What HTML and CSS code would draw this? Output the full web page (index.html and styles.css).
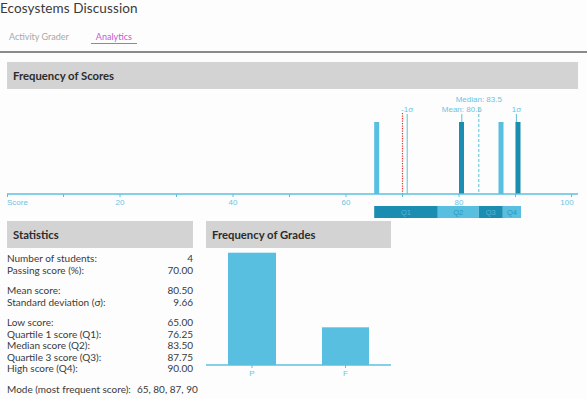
FILE: index.html
```html
<!DOCTYPE html>
<html lang="en">
<head>
    <meta charset="UTF-8">
    <title>Ecosystems Discussion</title>
    <link rel="stylesheet" href="styles.css">
</head>
<body>
    <h1 class="page-title">Ecosystems Discussion</h1>
    <nav class="tabs">
        <span class="tab">Activity Grader</span>
        <span class="tab tab-active">Analytics</span>
    </nav>
    <hr class="divider">

    <div class="content">
        <section class="panel">
            <h2 class="panel-title">Frequency of Scores</h2>
            <svg class="score-chart" width="571" height="132" viewBox="0 0 571 132">
                <!-- reference lines -->
                <line x1="395.5" y1="24" x2="395.5" y2="105" stroke="#e8322b" stroke-width="1.2" stroke-dasharray="1.2 1.3"/>
                <line x1="400.2" y1="25" x2="400.2" y2="105" stroke="#5bc0e0" stroke-width="1"/>
                <line x1="454.8" y1="25" x2="454.8" y2="105" stroke="#5bc0e0" stroke-width="1"/>
                <line x1="471.8" y1="20" x2="471.8" y2="105" stroke="#5bc0e0" stroke-width="1" stroke-dasharray="3 2"/>
                <line x1="509.4" y1="25" x2="509.4" y2="105" stroke="#5bc0e0" stroke-width="1"/>

                <g class="ref-label">
                    <text x="400.2" y="23" text-anchor="middle">-1σ</text>
                    <text x="454.8" y="23" text-anchor="middle">Mean: 80.5</text>
                    <text x="471.8" y="13" text-anchor="middle">Median: 83.5</text>
                    <text x="509.4" y="23" text-anchor="middle">1σ</text>
                </g>

                <!-- bars -->
                <rect x="367.2" y="33" width="5" height="72" fill="#58bfe0"/>
                <rect x="452" y="33" width="5" height="72" fill="#1b8db0"/>
                <rect x="491.5" y="33" width="5" height="72" fill="#58bfe0"/>
                <rect x="508.5" y="33" width="5" height="72" fill="#1b8db0"/>

                <!-- axis -->
                <line x1="0" y1="105" x2="571" y2="105" stroke="#5bc0e0" stroke-width="1.5"/>
                <g stroke="#5bc0e0" stroke-width="1">
                    <line x1="0.5" y1="105" x2="0.5" y2="108"/>
                    <line x1="56.5" y1="105" x2="56.5" y2="108"/>
                    <line x1="113" y1="105" x2="113" y2="108"/>
                    <line x1="169.5" y1="105" x2="169.5" y2="108"/>
                    <line x1="226" y1="105" x2="226" y2="108"/>
                    <line x1="282.5" y1="105" x2="282.5" y2="108"/>
                    <line x1="339" y1="105" x2="339" y2="108"/>
                    <line x1="395.5" y1="105" x2="395.5" y2="108"/>
                    <line x1="452" y1="105" x2="452" y2="108"/>
                    <line x1="508.5" y1="105" x2="508.5" y2="108"/>
                    <line x1="564.5" y1="105" x2="564.5" y2="108"/>
                </g>
                <g class="axis-label">
                    <text x="0" y="116">Score</text>
                    <text x="113" y="116" text-anchor="middle">20</text>
                    <text x="226" y="116" text-anchor="middle">40</text>
                    <text x="339" y="116" text-anchor="middle">60</text>
                    <text x="452" y="116" text-anchor="middle">80</text>
                    <text x="560" y="116" text-anchor="middle">100</text>
                </g>

                <!-- quartiles -->
                <rect x="367.2" y="117" width="63.6" height="12" fill="#1b8db0"/>
                <rect x="430.8" y="117" width="41" height="12" fill="#58bfe0"/>
                <rect x="471.8" y="117" width="24" height="12" fill="#1b8db0"/>
                <rect x="495.8" y="117" width="18.2" height="12" fill="#58bfe0"/>
                <g class="quartile-label">
                    <text x="399" y="126" text-anchor="middle" fill="#5ab6d8">Q1</text>
                    <text x="451.3" y="126" text-anchor="middle" fill="#2a97bd">Q2</text>
                    <text x="483.8" y="126" text-anchor="middle" fill="#5ab6d8">Q3</text>
                    <text x="504.9" y="126" text-anchor="middle" fill="#2a97bd">Q4</text>
                </g>
            </svg>
        </section>

        <div class="bottom-row">
            <section class="panel stats-panel">
                <h2 class="panel-title">Statistics</h2>
                <div class="stat-group">
                    <div class="stat-row"><span>Number of students:</span><span>4</span></div>
                    <div class="stat-row"><span>Passing score (%):</span><span>70.00</span></div>
                </div>
                <div class="stat-group">
                    <div class="stat-row"><span>Mean score:</span><span>80.50</span></div>
                    <div class="stat-row"><span>Standard deviation (σ):</span><span>9.66</span></div>
                </div>
                <div class="stat-group">
                    <div class="stat-row"><span>Low score:</span><span>65.00</span></div>
                    <div class="stat-row"><span>Quartile 1 score (Q1):</span><span>76.25</span></div>
                    <div class="stat-row"><span>Median score (Q2):</span><span>83.50</span></div>
                    <div class="stat-row"><span>Quartile 3 score (Q3):</span><span>87.75</span></div>
                    <div class="stat-row"><span>High score (Q4):</span><span>90.00</span></div>
                </div>
                <div class="stat-group">
                    <div class="stat-row"><span>Mode (most frequent score):</span><span>65, 80, 87, 90</span></div>
                </div>
            </section>

            <section class="panel grades-panel">
                <h2 class="panel-title">Frequency of Grades</h2>
                <svg class="grade-chart" width="185" height="132" viewBox="0 0 185 132">
                    <rect x="22" y="4.7" width="48" height="112.3" fill="#58bfe0"/>
                    <rect x="116" y="79.3" width="47" height="37.7" fill="#58bfe0"/>
                    <line x1="0" y1="117" x2="185" y2="117" stroke="#5bc0e0" stroke-width="1.5"/>
                    <line x1="46" y1="117" x2="46" y2="120" stroke="#5bc0e0" stroke-width="1"/>
                    <line x1="139.5" y1="117" x2="139.5" y2="120" stroke="#5bc0e0" stroke-width="1"/>
                    <g class="axis-label">
                        <text x="46" y="128" text-anchor="middle">P</text>
                        <text x="139.5" y="128" text-anchor="middle">F</text>
                    </g>
                </svg>
            </section>
        </div>
    </div>
</body>
</html>
```

FILE: styles.css
```css
body {
    font-family: 'Lato', 'Open Sans', sans-serif;
    margin: 0;
    padding: 0;
    background-color: #fdfdfd;
    color: #333;
}

.page-title {
    margin: 0;
    font-size: 13.5px;
    font-weight: 400;
    line-height: 17px;
    height: 20px;
    color: #3a3a3a;
    letter-spacing: 0.1px;
}

.tabs {
    display: flex;
    gap: 17px;
    margin-top: 11px;
    padding-left: 4px;
}

.tab {
    padding: 0 5px;
    font-size: 9px;
    line-height: 12px;
    color: #a8a8a8;
    border-bottom: 1px solid transparent;
}

.tab-active {
    color: #c25ad4;
    border-bottom-color: #c462d6;
}

.divider {
    margin: 7px 0 0;
    border: 0;
    height: 2px;
    background-color: #8a8a8a;
}

.content {
    padding: 9px 9px 0 7px;
}

.panel-title {
    margin: 0;
    height: 27px;
    padding-left: 6px;
    display: flex;
    align-items: center;
    background-color: #d3d3d3;
    font-size: 11.3px;
    font-weight: 700;
    color: #2b2b2b;
}

.score-chart,
.grade-chart {
    display: block;
}

.ref-label text,
.axis-label text {
    font-family: 'Liberation Sans', Arial, sans-serif;
    font-size: 8px;
    fill: #6cc3e3;
}

.quartile-label text {
    font-family: 'Liberation Sans', Arial, sans-serif;
    font-size: 7.5px;
}

.bottom-row {
    display: flex;
    gap: 13px;
}

.stats-panel {
    width: 186px;
}

.grades-panel {
    width: 185px;
}

.stat-group {
    margin-top: 9px;
}

.stat-group:first-of-type {
    margin-top: 5px;
}

.stat-row {
    display: flex;
    justify-content: space-between;
    gap: 6px;
    white-space: nowrap;
    font-size: 10px;
    line-height: 11.5px;
    color: #3a3a3a;
}
```
